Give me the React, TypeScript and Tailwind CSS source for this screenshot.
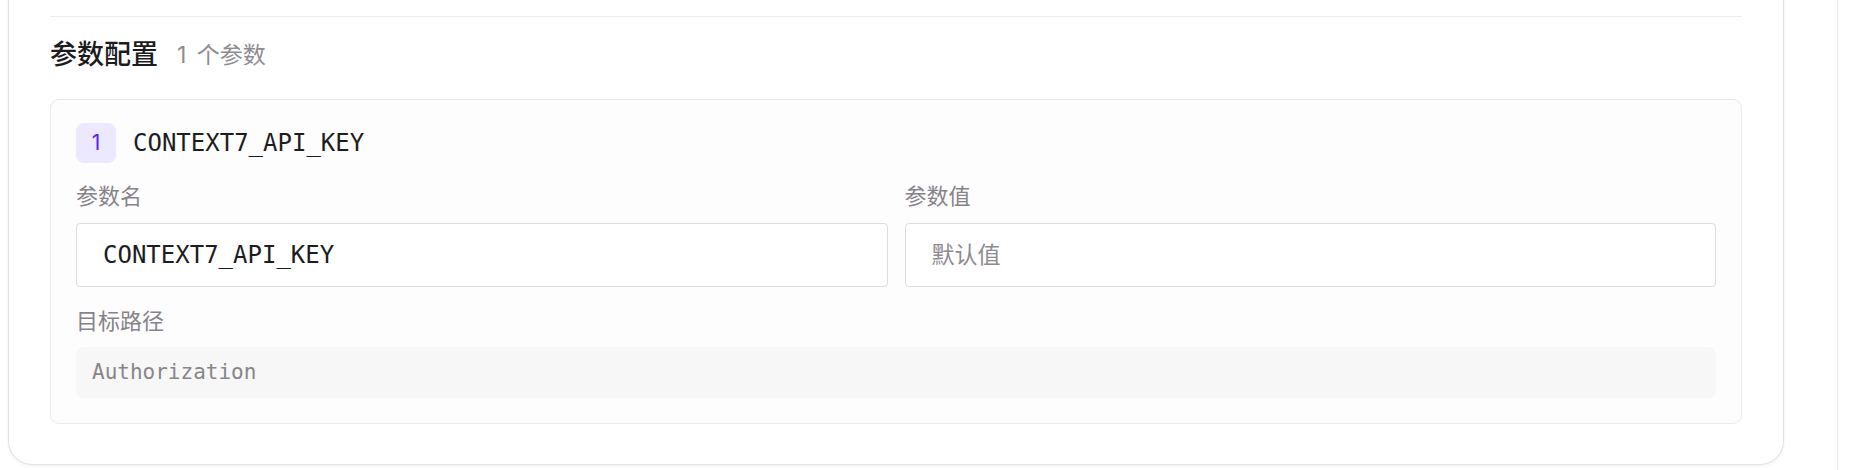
const sans = "font-['Inter','Noto_Sans_CJK_SC',sans-serif]";
const mono = "font-['DejaVu_Sans_Mono','Liberation_Mono',monospace]";

const Label = ({ children }: { children: string }) => (
  <div className={`${sans} text-[22px] leading-[30px] text-[#86848a]`}>{children}</div>
);

const ParamCard = ({ index, name }: { index: number; name: string }) => (
  <div className="rounded-[9px] border border-[#eaeaea] bg-[#fdfdfd] px-[25px] pt-[23px] pb-[25px]">
    <div className="flex h-[40px] items-center gap-[17px]">
      <div
        className={`${sans} flex h-[40px] w-[40px] items-center justify-center rounded-[8px] bg-[#ece8fd] text-[21px] text-[#5624f0]`}
      >
        {index}
      </div>
      <div className={`${mono} text-[24px] leading-[32px] text-[#1d1d1f]`}>{name}</div>
    </div>

    <div className="mt-[18px] grid grid-cols-2 gap-[17px]">
      <div className="flex flex-col gap-[12px]">
        <Label>参数名</Label>
        <div className="flex h-[64px] items-center rounded-[4px] border border-[#dddddd] bg-white px-[26px]">
          <span className={`${mono} text-[24px] text-[#1d1d1f]`}>{name}</span>
        </div>
      </div>
      <div className="flex flex-col gap-[12px]">
        <Label>参数值</Label>
        <div className="flex h-[64px] items-center rounded-[4px] border border-[#dddddd] bg-white px-[26px]">
          <span className={`${sans} text-[23px] text-[#8d8b90]`}>默认值</span>
        </div>
      </div>
    </div>

    <div className="mt-[19px] flex flex-col gap-[11px]">
      <Label>目标路径</Label>
      <div className="flex h-[51px] items-center rounded-[8px] bg-[#f7f7f7] px-[16px]">
        <span className={`${mono} text-[21px] text-[#88858a]`}>Authorization</span>
      </div>
    </div>
  </div>
);

export default function App() {
  return (
    <div className="flex h-[470px] w-[1860px] overflow-hidden bg-white">
      <div className="flex w-[1837px] flex-col justify-end pb-[5px] pl-[8px]">
        <div className="w-[1776px] rounded-b-[24px] border border-t-0 border-[#e4e4e4] bg-white px-[41px] pb-[40px] shadow-[0_1px_3px_rgba(0,0,0,0.06)]">
          <div className="h-[16px]" />
          <div className="h-px bg-[#ececec]" />
          <div className="mt-[20px] mb-[26px] flex h-[36px] items-center gap-[19px]">
            <span className={`${sans} text-[27px] leading-[36px] font-medium text-[#1c1c1e]`}>参数配置</span>
            <span className={`${sans} text-[23px] leading-[36px] text-[#8e8c91] [word-spacing:4px]`}>1 个参数</span>
          </div>
          <ParamCard index={1} name="CONTEXT7_API_KEY" />
        </div>
      </div>
      <div className="flex-1 border-l border-[#e6e6e6]" />
    </div>
  );
}
